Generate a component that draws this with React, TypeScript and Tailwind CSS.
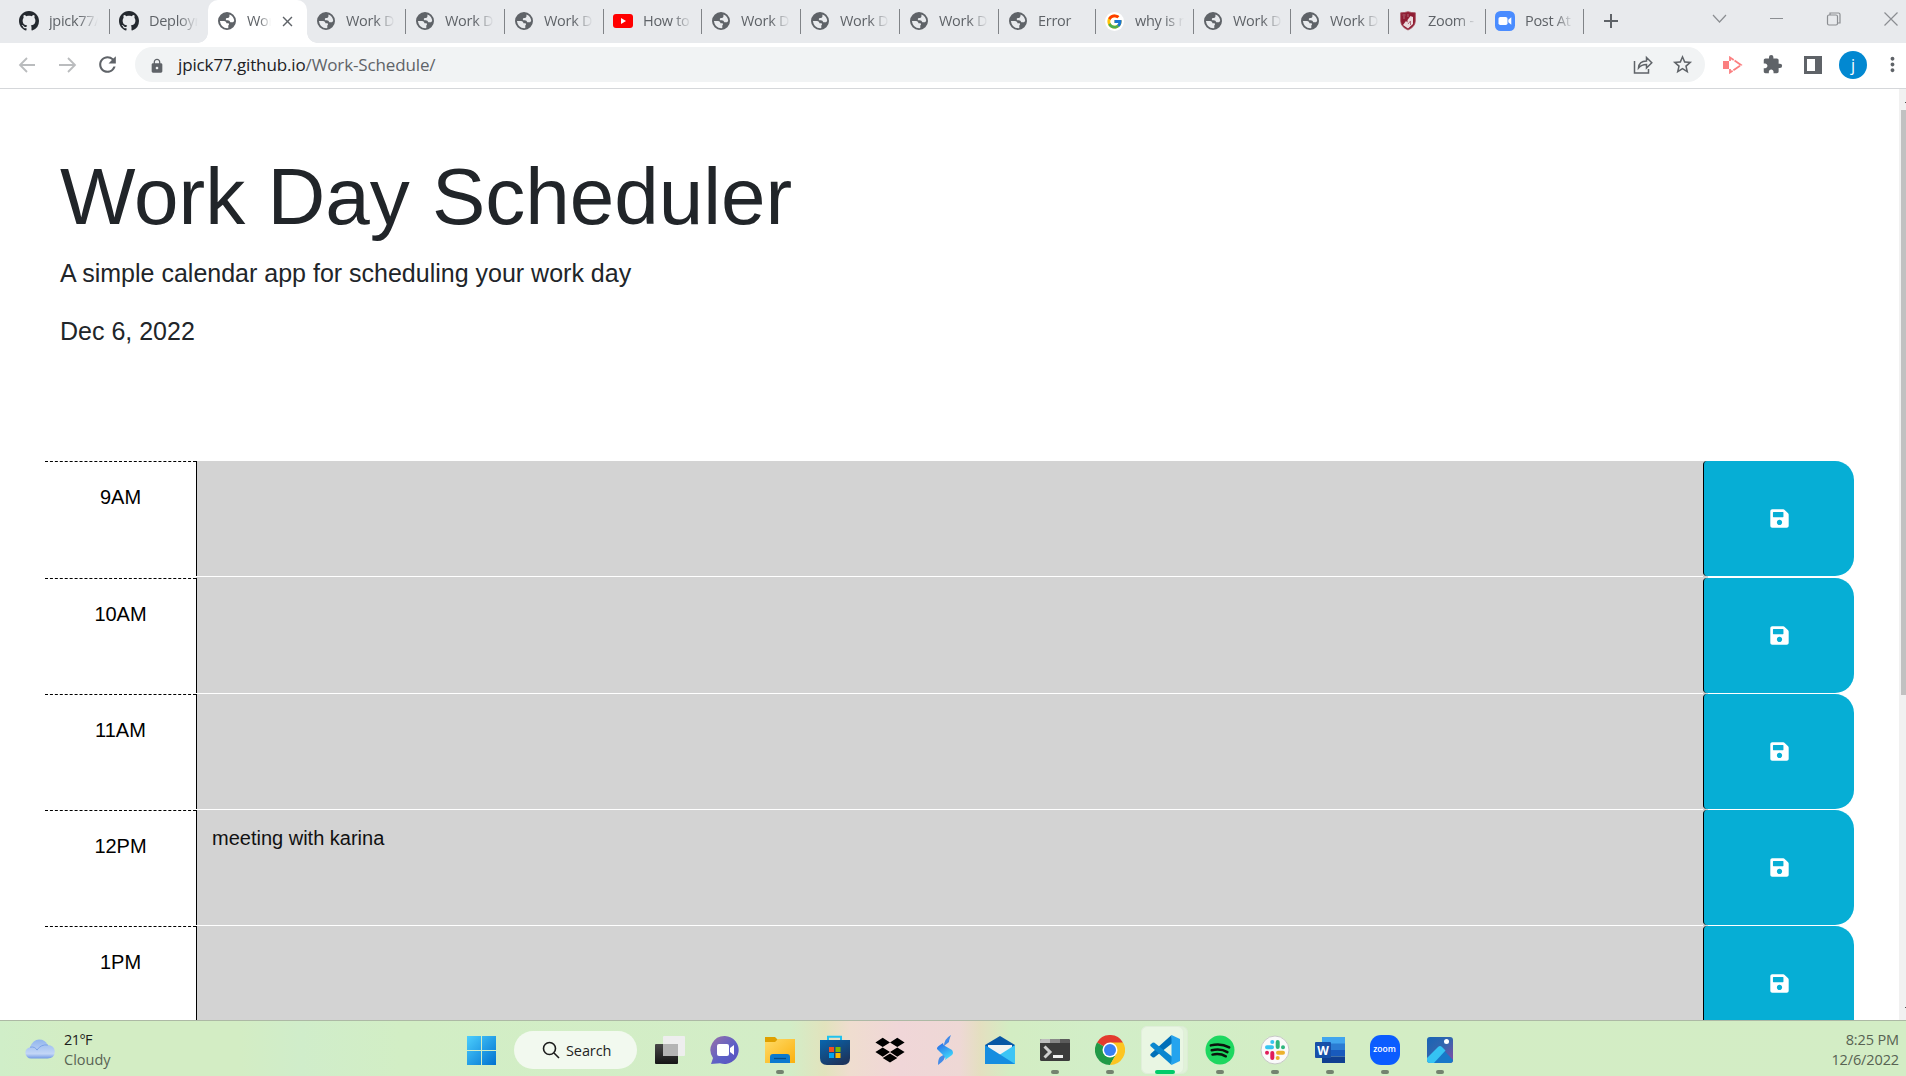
import React from 'react';
import { FaSave } from 'react-icons/fa';
import { FcGoogle } from 'react-icons/fc';
import { MdLock, MdExtension, MdStarBorder, MdRefresh, MdMoreVert, MdClose, MdAdd } from 'react-icons/md';

const Github = () => (
  <svg viewBox="0 0 16 16" className="size-5" fill="#24292f">
    <path fillRule="evenodd" d="M8 0C3.58 0 0 3.58 0 8c0 3.54 2.29 6.53 5.47 7.59.4.07.55-.17.55-.38 0-.19-.01-.82-.01-1.49-2.01.37-2.53-.49-2.69-.94-.09-.23-.48-.94-.82-1.13-.28-.15-.68-.52-.01-.53.63-.01 1.08.58 1.23.82.72 1.21 1.87.87 2.33.66.07-.52.28-.87.51-1.07-1.78-.2-3.64-.89-3.64-3.95 0-.87.31-1.59.82-2.15-.08-.2-.36-1.02.08-2.12 0 0 .67-.21 2.2.82.64-.18 1.32-.27 2-.27s1.36.09 2 .27c1.53-1.04 2.2-.82 2.2-.82.44 1.1.16 1.92.08 2.12.51.56.82 1.27.82 2.15 0 3.07-1.87 3.75-3.65 3.95.29.25.54.73.54 1.48 0 1.07-.01 1.93-.01 2.2 0 .21.15.46.55.38A8 8 0 0 0 16 8c0-4.42-3.58-8-8-8z" />
  </svg>
);
const Globe = () => (
  <svg viewBox="0 0 18 18" className="ml-px size-[18px]" fill="#5f6368">
    <path
      fillRule="evenodd"
      d="M9 0a9 9 0 1 1 0 18A9 9 0 0 1 9 0zM11.500 2.400C14.300 3.400 16.200 6 16.200 9L15 10.200H12.300Q11.800 8.300 9.800 8.200H8.200Q7 6.800 8.600 6H10.200Q11.900 5 11.500 2.400zM1.900 9H6.300Q8.500 9.500 8.500 11.300H10.600Q11.700 12.500 10.300 13.500V16.100Q3 16.700 1.900 9z"
    />
  </svg>
);
const Google = () => (
  <span className="flex size-[19px] items-center justify-center rounded-full bg-white">
    <FcGoogle className="size-[17px]" />
  </span>
);
const Shield = () => (
  <svg viewBox="0 0 16 20" className="ml-0.5 h-5 w-4">
    <path d="M.7 1.8Q4.5 1.8 8 .7q3.500 1.100 7.300 1.100v8.500Q15 16 8 19 1 16 .7 10.300z" fill="#8f1d33" stroke="#a54a59" strokeWidth=".8" />
    <path d="M3 14l3-4 1.500 1.500V9l3-4 2.500 1v7l-5 4.500z" fill="#ead9dc" />
    <path d="M2.500 4h3M4 5v3M8 3v3M8 13l2.500-3v4" stroke="#b06a78" fill="none" />
  </svg>
);
const ZoomCam = () => (
  <svg viewBox="0 0 20 20" className="size-5">
    <rect width="20" height="20" rx="5.500" fill="#4a8cff" />
    <rect x="3.500" y="6" width="9" height="8" rx="1.800" fill="#fff" />
    <path d="M13.300 8.700 16.300 6.300v7.400l-3-2.400z" fill="#fff" />
  </svg>
);
const YouTube = () => (
  <svg viewBox="0 0 20 14" className="h-[14px] w-5">
    <rect width="20" height="14" rx="3" fill="#f00" />
    <path d="M8 4v6l5-3z" fill="#fff" />
  </svg>
);

type Tab = { label: string; icon: () => React.JSX.Element; width: string; active?: boolean; plain?: boolean };
const tabs: Tab[] = [
  { label: 'jpick77/', icon: Github, width: 'w-[100px]' },
  { label: 'Deploym', icon: Github, width: 'w-[98px]', plain: true },
  { label: 'Work', icon: Globe, width: 'w-[99px]', active: true },
  { label: 'Work D', icon: Globe, width: 'w-[99px]' },
  { label: 'Work D', icon: Globe, width: 'w-[99px]' },
  { label: 'Work D', icon: Globe, width: 'w-[99px]' },
  { label: 'How to', icon: YouTube, width: 'w-[98px]' },
  { label: 'Work D', icon: Globe, width: 'w-[99px]' },
  { label: 'Work D', icon: Globe, width: 'w-[99px]' },
  { label: 'Work D', icon: Globe, width: 'w-[99px]' },
  { label: 'Error', icon: Globe, width: 'w-[97px]' },
  { label: 'why is n', icon: Google, width: 'w-[98px]' },
  { label: 'Work D', icon: Globe, width: 'w-[97px]' },
  { label: 'Work D', icon: Globe, width: 'w-[98px]' },
  { label: 'Zoom -', icon: Shield, width: 'w-[97px]' },
  { label: 'Post At', icon: ZoomCam, width: 'w-[98px]' },
];

function TabStrip() {
  return (
    <div className="flex h-[43px] bg-[#e8eaed] pl-2.5">
      {tabs.map((t, i) => (
        <div
          key={i}
          className={
            t.active
              ? `${t.width} relative flex h-full shrink-0 items-center rounded-t-[10px] bg-white pb-px pl-[9px]`
              : `${t.width} flex h-[42px] shrink-0 items-center pl-[9px]`
          }
        >
          {t.active && (
            <>
              <span className="absolute bottom-0 -left-2.5 size-2.5 bg-[radial-gradient(circle_at_0_0,transparent_9.500px,#fff_10px)]" />
              <span className="absolute -right-2.5 bottom-0 size-2.5 bg-[radial-gradient(circle_at_100%_0,transparent_9.500px,#fff_10px)]" />
            </>
          )}
          <span className="flex w-[30px] shrink-0 items-center">
            <t.icon />
          </span>
          <span
            className={
              t.active
                ? 'w-6 overflow-hidden pb-px text-[14.5px] tracking-[-0.3px] whitespace-nowrap text-[#5f6368] [mask-image:linear-gradient(to_right,#000_50%,transparent)]'
                : 'w-[49px] overflow-hidden pb-px text-[14.5px] tracking-[-0.3px] whitespace-nowrap text-[#5f6368] [mask-image:linear-gradient(to_right,#000_60%,transparent)]'
            }
          >
            {t.label}
          </span>
          {t.active ? (
            <MdClose className="ml-[8px] size-[17px] shrink-0 text-[#5f6368]" />
          ) : (
            !t.plain && <span className="ml-auto h-[25px] w-px bg-[#808387]" />
          )}
        </div>
      ))}
      <MdAdd className="mt-[9px] ml-[15px] size-6 text-[#5f6368]" />
      <svg viewBox="0 0 190 40" className="mt-px ml-[89px] h-10 w-[190px] shrink-0" fill="none" stroke="#8b8e92" strokeWidth="1.200">
        <path d="M1 14l6.500 7 6.500-7M58 17.500h13M172.500 11.500l13 13m0-13-13 13" />
        <rect x="115.500" y="14" width="10" height="10" rx="1.500" />
        <path d="M118 14v-2h8.500q1.500 0 1.500 1.500V22h-2" />
      </svg>
    </div>
  );
}

function Toolbar() {
  return (
    <div className="flex h-[46px] items-center border-b border-[#d5d7da] pb-0.5">
      <svg viewBox="0 0 80 20" className="ml-4 h-5 w-20" fill="none" stroke="#babcbe" strokeWidth="1.800">
        <path d="M19 10H4.500M11 3l-7 7 7 7M43 10h15M52 3l7 7-7 7" />
      </svg>
      <MdRefresh className="-ml-px size-[25px] text-[#5f6368]" />
      <div className="ml-[15px] flex h-[35px] w-[1570px] items-center rounded-full bg-[#f1f3f4] pl-[14px]">
        <MdLock className="mt-0.5 size-4 text-[#5f6368]" />
        <span className="mt-px ml-[13px] text-[17px] tracking-[-0.13px] whitespace-nowrap text-[#202124]">
          jpick77.github.io<span className="text-[#5f6368]">/Work-Schedule/</span>
        </span>
        <svg viewBox="0 0 20 20" className="mt-px ml-auto size-5" fill="none" stroke="#5f6368" strokeWidth="1.500">
          <path d="M1.500 6v12h14v-4M5.500 13q.5-7 8-7V2.500l5.300 5.200-5.300 5.300V9.500q-5 0-8 3.500z" />
        </svg>
        <MdStarBorder className="mr-[11px] ml-[18px] size-[23px] text-[#5f6368]" />
      </div>
      <svg viewBox="0 0 20 18" className="ml-[18px] h-[18px] w-5" fill="none" stroke="#fb7f80">
        <path d="M0 5h6v8H0z" fill="#fb7f80" stroke="none" />
        <path d="M7 5V1.500L18 9 7 16.500V13" strokeWidth="1.800" strokeDasharray="8 1" />
      </svg>
      <MdExtension className="ml-[19px] size-[21px] text-[#5f6368]" />
      <svg viewBox="0 0 18 18" className="ml-[21px] size-[18px]">
        <path d="M0 0h18v18H0zM3 3v12h8V3z" fill="#5f6368" fillRule="evenodd" />
      </svg>
      <span className="ml-[17px] flex size-7 items-center justify-center rounded-full bg-[#0288d1] text-base leading-none text-white">j</span>
      <MdMoreVert className="ml-3.5 size-[23px] shrink-0 text-[#5f6368]" />
    </div>
  );
}

const rows = [
  { time: '9AM', text: '' },
  { time: '10AM', text: '' },
  { time: '11AM', text: '' },
  { time: '12PM', text: 'meeting with karina' },
  { time: '1PM', text: '' },
];

function Scheduler() {
  return (
    <main className="h-[931px] min-w-0 flex-1 overflow-hidden bg-white font-['Liberation_Sans',sans-serif]">
      <header className="h-[372.4px] pt-[60px] pl-[60px] text-[#212529]">
        <h1 className="text-[80px] leading-[96px]">Work Day Scheduler</h1>
        <p className="mt-[9px] text-[25px] leading-[38px]">A simple calendar app for scheduling your work day</p>
        <p className="mt-5 text-[25px] leading-[38px]">Dec 6, 2022</p>
      </header>
      {rows.map((r) => (
        <div key={r.time} className="ml-[45px] flex h-[116.2px] w-[1809px] text-[20px] leading-[30px]">
          <div className="h-[115px] w-[151px] border-t border-dashed border-black pt-[20px] text-center text-black">{r.time}</div>
          <div className="h-full w-[1507px] bg-[#d3d3d3]">
            <div className="h-[116px] border-b border-b-white">
              <div className="h-[115px] border-l border-black pt-[13px] pl-[15px] text-[#111]">{r.text}</div>
            </div>
          </div>
          <div className="h-full w-[151px] bg-[linear-gradient(to_right,#d3d3d3_5px,#fff_5px)]">
            <button className="flex h-[115px] w-full items-center justify-center rounded-l-[4px] rounded-r-[19px] border-l border-black bg-[#06aed5] text-white">
              <FaSave className="size-[21px]" />
            </button>
          </div>
        </div>
      ))}
    </main>
  );
}

const TaskView = () => (
  <svg viewBox="0 0 30 30" className="size-[30px]">
    <defs><linearGradient id="tv" x2="0" y2="1"><stop stopColor="#484848" /><stop offset="1" stopColor="#161616" /></linearGradient></defs>
    <rect y="9" width="23" height="20" rx="1" fill="url(#tv)" />
    <rect x="8" y="1" width="22" height="20" rx="1" fill="#eee" />
    <path d="M8 9h15v12H8z" fill="#b4b4b4" />
  </svg>
);
const Chat = () => (
  <svg viewBox="0 0 30 30" className="size-[30px]">
    <defs><linearGradient id="ch" x2="1" y2="1"><stop stopColor="#9a71a8" /><stop offset=".6" stopColor="#5b5fc7" /><stop offset="1" stopColor="#5b51bd" /></linearGradient></defs>
    <path d="M15 1a14 14 0 1 1-5 27.200L1 29l2-6A14 14 0 0 1 15 1z" fill="url(#ch)" />
    <rect x="7" y="9" width="12" height="12" rx="2" fill="#fff" /><path d="M20 13l4-3v10l-4-3z" fill="#fff" />
  </svg>
);
const Folder = () => (
  <svg viewBox="0 0 30 30" className="size-[30px]">
    <defs><linearGradient id="fo" x2="1" y2="1"><stop stopColor="#ffdb68" /><stop offset="1" stopColor="#fbb00d" /></linearGradient></defs>
    <path d="M0 2h10l3 3v6H0z" fill="#dfa000" /><path d="M0 7h10l3-3h17v24H0z" fill="url(#fo)" />
    <path d="M5 28v-6q0-3 3-3h14q3 0 3 3v6z" fill="#0b79cf" /><path d="M9 23.500h12" stroke="#074b87" strokeWidth="1.300" />
  </svg>
);
const Store = () => (
  <svg viewBox="0 0 30 30" className="size-[30px]">
    <defs><linearGradient id="st" x2=".6" y2="1"><stop stopColor="#0866af" /><stop offset="1" stopColor="#1c355e" /></linearGradient></defs>
    <path d="M8 6V1.700h13V6" fill="none" stroke="#20c2ee" strokeWidth="2" />
    <path d="M0 5h30v18q0 7-7 7H7q-7 0-7-7z" fill="url(#st)" />
    <path d="M9 12h5v5H9z" fill="#f25022" /><path d="M15.500 12h5v5h-5z" fill="#7fba00" /><path d="M9 18h5v5H9z" fill="#00a4ef" /><path d="M15.500 18h5v5h-5z" fill="#ffb900" />
  </svg>
);
const Dropbox = () => (
  <svg viewBox="0 0 30 26" className="h-[26px] w-[30px]">
    <path d="M7.700.7 15 5.400 7.700 10 .4 5.400zM22.300.7l7.300 4.700-7.300 4.600L15 5.400zM7.700 10.400 15 15l-7.300 4.700L.4 15zM22.300 10.400l7.300 4.600-7.300 4.700L15 15zM7.700 21 15 16.500l7.300 4.500L15 25.600z" />
  </svg>
);
const Bolt = () => (
  <svg viewBox="0 0 30 30" className="size-[30px]">
    <defs><linearGradient id="bo" x2=".5" y2="1"><stop stopColor="#2864e5" /><stop offset="1" stopColor="#3fd6fa" /></linearGradient></defs>
    <path d="M21 0q-2 5-2 7l-5 4q0-7 7-11zM8 30q0-6 2-8l5-3q1 6-7 11z" fill="#438be8" />
    <path d="M13 8q-7 4-6 6l8 8q1 1 0 3l7-5q2-2 0-5l-7-4q-2-1-2-3z" fill="url(#bo)" />
  </svg>
);
const Mail = () => (
  <svg viewBox="0 0 30 28" className="h-7 w-[30px]">
    <path d="M0 9 15 0l15 9v5H0z" fill="#0756a5" /><path d="M3 9h24v9H3z" fill="#f2f2f2" />
    <path d="M30 9v19H0z" fill="#3cc5f5" /><path d="M0 9l30 19H0z" fill="#168de0" />
  </svg>
);
const Terminal = () => (
  <svg viewBox="0 0 30 22" className="h-[22px] w-[30px]">
    <rect width="30" height="22" rx="1.500" fill="#3b3b3b" /><path d="M0 4V1.500Q0 0 1.500 0H10v4z" fill="#bdbdbd" /><path d="M10 0h10v4H10z" fill="#888" /><path d="M20 0h8.500Q30 0 30 1.500V4H20z" fill="#5b5b5b" />
    <path d="M4.500 7.500 10 13l-5.500 5.500" fill="none" stroke="#cecece" strokeWidth="3" /><path d="M13 16h10v3H13z" fill="#eee" />
  </svg>
);
const Chrome = () => (
  <svg viewBox="0 0 30 30" className="size-[30px]">
    <path d="M15 15 2 7.500a15 15 0 0 1 26 0z" fill="#e33b2e" /><path d="M2 7.500A15 15 0 0 0 15 30l6.500-11.200L15 15z" fill="#219a47" />
    <path d="M28 7.500A15 15 0 0 1 15 30l6.300-11.300L15 7.500z" fill="#fcc521" />
    <circle cx="15" cy="15" r="7.500" fill="#fff" /><circle cx="15" cy="15" r="6" fill="#3880f3" />
  </svg>
);
const Code = () => (
  <svg viewBox="0 0 30 30" className="size-[30px]">
    <path d="M21.500 0 1 18.500q-1.500 1.500 0 2.500l1.500 1.200q1 .8 2 0L22.500 8z" fill="#0070b8" />
    <path d="M21.500 30 1 11.500Q-.5 10 1 9l1.500-1.200q1-.8 2 0L22.500 22z" fill="#0a87cf" />
    <path d="M21.500 0 30 4v22l-8.500 4z" fill="#25a4ee" />
  </svg>
);
const Spotify = () => (
  <svg viewBox="0 0 30 30" className="size-[30px]">
    <circle cx="15" cy="15" r="14.500" fill="#1ed760" />
    <path d="M5.800 10.400q10-2.700 18.400 2M6.700 15.200q9-2.200 15.700 1.900M7.500 19.600q7.500-1.600 13.300 1.700" fill="none" stroke="#0b130d" strokeWidth="2.500" strokeLinecap="round" />
  </svg>
);
const Slack = () => (
  <svg viewBox="0 0 30 30" className="size-[30px]">
    <circle cx="15" cy="15" r="14" fill="#fafafa" stroke="#c7c8c6" />
    <g strokeWidth="4" strokeLinecap="round">
      <path d="M7 12.300h5M12.300 7h.01" stroke="#36c5f0" /><path d="M17.700 7v5M23 12.300h.01" stroke="#2eb67d" />
      <path d="M18 17.700h5M17.700 23h.01" stroke="#ecb22e" /><path d="M12.300 18v5M7 17.700h.01" stroke="#e01e5a" />
    </g>
  </svg>
);
const Word = () => (
  <svg viewBox="0 0 30 26" className="h-[26px] w-[30px]">
    <path d="M7 0h23v7H7z" fill="#41a5ee" /><path d="M7 6.500h23V13H7z" fill="#2b7cd3" /><path d="M7 13h23v6.500H7z" fill="#185abd" /><path d="M7 19.500h23V26H7z" fill="#103f91" />
    <rect y="5" width="16" height="16" rx="1" fill="#1850a8" />
    <text x="8" y="17.500" textAnchor="middle" fontSize="12" fontWeight="700" fill="#fff" fontFamily="Open Sans">W</text>
  </svg>
);
const ZoomApp = () => (
  <span className="flex size-[30px] items-center justify-center rounded-[11px] bg-[#0b5cff] pb-0.5 text-[8.5px] leading-none font-semibold text-white">zoom</span>
);
const Photos = () => (
  <svg viewBox="0 0 26 26" className="size-[26px]">
    <defs>
      <linearGradient id="ph" x2="1" y2="1"><stop stopColor="#1864b5" /><stop offset=".5" stopColor="#3465ae" /><stop offset="1" stopColor="#8b4aa5" /></linearGradient>
      <clipPath id="phc"><rect width="26" height="26" rx="3" /></clipPath>
    </defs>
    <g clipPath="url(#phc)">
      <rect width="26" height="26" fill="url(#ph)" />
      <path d="M5 26 15.500 15q1.500-1.500 3 0L27 24v3H5z" fill="#1878c8" />
      <path d="M-1 22 11 10q2-1.800 4 0l3.500 3.500L6 27h-7z" fill="#35c3f3" />
      <circle cx="19.500" cy="4.500" r="2.500" fill="#fff" />
    </g>
  </svg>
);

const apps = [
  { icon: TaskView }, { icon: Chat }, { icon: Folder, open: true }, { icon: Store }, { icon: Dropbox }, { icon: Bolt },
  { icon: Mail }, { icon: Terminal, open: true }, { icon: Chrome, open: true }, { icon: Code, focus: true },
  { icon: Spotify, open: true }, { icon: Slack, open: true }, { icon: Word, open: true }, { icon: ZoomApp, open: true }, { icon: Photos, open: true },
];

function Taskbar() {
  return (
    <footer className="flex h-14 border-t border-[#adb9a5] bg-[linear-gradient(90deg,#d0eec8_0px,#d3edc4_70px,#d3edc4_240px,#d0edca_300px,#d2eec5_400px,#d3edc7_790px,#e2e3bd_825px,#efddcf_850px,#f0d6d8_900px,#eed8d5_960px,#e4dfc0_980px,#d3edc3_1010px,#d2eec8_1100px,#d3edc4_1300px,#d3edc5_1906px)]">
      <div className="flex w-[467px] pl-[25px]">
        <svg viewBox="0 0 30 20" className="mt-[18px] h-5 w-[30px]">
          <defs><linearGradient id="cl" x2="0" y2="1"><stop stopColor="#91b5ed" /><stop offset=".75" stopColor="#c3d6f6" /><stop offset="1" stopColor="#7199e4" /></linearGradient></defs>
          <path d="M6 19.500A5.700 5.700 0 0 1 5 8.200Q8 .5 14 .5q6.500 0 8.500 5.500 7 .3 7.300 6.500-.3 7-7.300 7z" fill="url(#cl)" />
          <path d="M5 8.200q5-1 7 3M12 11q4-6 11-5" fill="none" stroke="#7da3e8" />
        </svg>
        <div className="mt-[9px] ml-[9px] text-[14.5px] leading-5 text-[#1d211b]">
          <p className="tracking-[-0.6px]">21°F</p>
          <p className="text-[#596454]">Cloudy</p>
        </div>
      </div>
      <svg viewBox="0 0 29 29" className="mt-[15px] size-[29px]">
        <defs><linearGradient id="wi" x2="1" y2="1"><stop stopColor="#4ccefd" /><stop offset="1" stopColor="#0072d0" /></linearGradient></defs>
        <path d="M0 0h14v14H0zM15 0h14v14H15zM0 15h14v14H0zM15 15h14v14H15z" fill="url(#wi)" />
      </svg>
      <div className="mt-2.5 ml-[18px] flex h-[38px] w-[123px] items-center rounded-full bg-[#f2f9ef] pl-7">
        <svg viewBox="0 0 18 18" className="size-[18px]" fill="none" stroke="#1c1c1c" strokeWidth="1.600">
          <circle cx="7.500" cy="7.500" r="6" /><path d="m12 12 5 5" />
        </svg>
        <span className="mt-px ml-1.5 text-[14.5px] tracking-[-0.1px] text-[#1f1f1f]">Search</span>
      </div>
      <div className="ml-[5px] flex">
        {apps.map((a, i) => (
          <div key={i} className="relative flex w-[55px] items-center justify-center pt-1.5 pb-[3px]">
            {a.focus && <span className="absolute top-[5px] left-1 h-12 w-[47px] rounded-md border border-[#dcecd5] bg-[#e0f2d8]" />}
            {a.focus && <span className="absolute top-[5px] left-1 h-12 w-[43px] rounded-md border border-[#e0eeda] bg-[#e9f6e3]" />}
            <span className="relative"><a.icon /></span>
            {a.open && <span className="absolute bottom-0.5 h-1 w-2 rounded-full bg-[#74836f]" />}
            {a.focus && <span className="absolute bottom-0.5 h-1 w-5 rounded-full bg-[#00cc6a]" />}
          </div>
        ))}
      </div>
      <div className="mt-[9px] mr-[7px] ml-auto text-right text-[14.5px] leading-5 tracking-[-0.12px] text-[#586353]">
        <p>8:25 PM</p>
        <p>12/6/2022</p>
      </div>
    </footer>
  );
}

export default function App() {
  return (
    <div className="h-[1076px] w-[1906px] overflow-hidden bg-white font-['Open_Sans',sans-serif]">
      <TabStrip />
      <Toolbar />
      <div className="flex">
        <Scheduler />
        <div className="flex w-[7px] flex-col items-end bg-[#f1f1f1] pt-[13px]">
          <span className="mb-[7px] h-px w-px bg-[#505050]" />
          <span className="h-[585px] w-[5px] bg-[#c1c1c1]" />
          <span className="mt-auto mb-3 h-px w-px bg-[#505050]" />
        </div>
      </div>
      <Taskbar />
    </div>
  );
}
